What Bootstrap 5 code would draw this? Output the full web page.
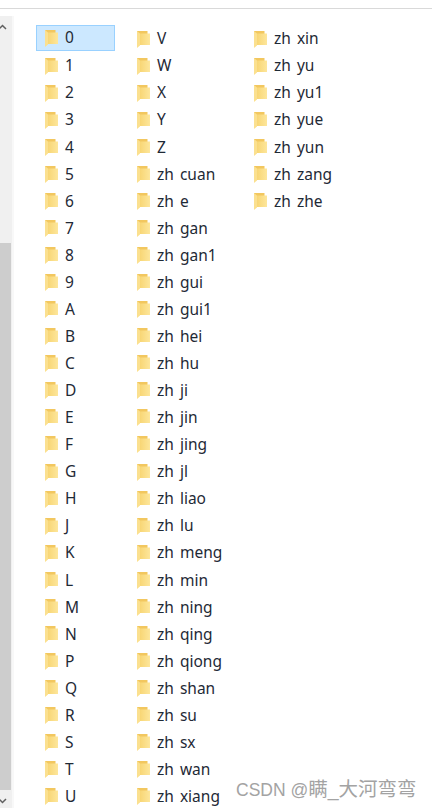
<!DOCTYPE html>
<html lang="en">
<head>
    <meta charset="UTF-8">
    <meta name="viewport" content="width=device-width, initial-scale=1.0">
    <title>Folders</title>
    <link href="https://cdn.jsdelivr.net/npm/bootstrap@5.3.0/dist/css/bootstrap.min.css" rel="stylesheet">
    <style>
        body { background: #fff; overflow: hidden; }
        .shot { height: 808px; width: 432px; position: relative; font-family: "Noto Sans", "Open Sans", sans-serif; }
        .top-rule { height: 9px; border-bottom: 1px solid #d9d9d9; }
        .scroll-rail { width: 14px; height: 792px; margin-top: 7px; background: #f0f0f0; border-right: 2px solid #f8f8f8; flex: none; }
        .scroll-btn { height: 16px; overflow: hidden; }
        .scroll-thumb { width: 11px; height: 547px; margin-top: 211px; background: #cdcdcd; }
        .file-area { padding: 16.5px 0 0 22px; }
        .file-col { width: 92px; }
        .file-col.wide { width: 117px; }
        .file-col.last { width: 120px; }
        .file-item { height: 27.07px; padding-left: 8px; gap: 7px; color: #1f2a36; font-size: 15.5px; line-height: 1; border: 1px solid transparent; white-space: pre; word-spacing: -1px; }
        .file-item.picked { background: #cce8ff; border-color: #99d1ff; width: 79px; height: 26px; margin: -1px 0 2.07px; padding-top: 1px; }
        .folder-ico { width: 13px; height: 17px; flex: none; }
        .arrow-ico { margin: 6px 0 0 -2px; flex: none; }
        .watermark { position: absolute; left: 236px; top: 779px; font-size: 17.5px; line-height: 20px; color: #a3a3a3; white-space: nowrap; font-family: "Liberation Sans", "Noto Sans CJK SC", sans-serif; }
        .watermark span { font-size: 19.5px; }
    </style>
</head>
<body>
<svg width="0" height="0" class="position-absolute">
    <defs>
        <linearGradient id="fold" x1="0" y1="0" x2="1" y2="0">
            <stop offset="0" stop-color="#f8d675"/>
            <stop offset="1" stop-color="#fde69b"/>
        </linearGradient>
        <symbol id="folder" viewBox="0 0 13 17">
            <path d="M0 0H10.5V14H0Z" fill="#f2c75f"/>
            <path d="M3 2.5H13V14H3Z" fill="url(#fold)"/>
            <path d="M0 0L3 2.5V14.5L0 17Z" fill="#fbe08f"/>
        </symbol>
    </defs>
</svg>

<div class="shot">
    <div class="top-rule"></div>
    <div class="d-flex">
        <div class="scroll-rail">
            <div class="scroll-btn d-flex align-items-center">
                <svg class="arrow-ico" width="9" height="6" viewBox="0 0 9 6"><path d="M1 5L4.5 1.5L8 5" fill="none" stroke="#606060" stroke-width="1.5"/></svg>
            </div>
            <div class="scroll-thumb"></div>
            <div class="scroll-btn d-flex align-items-center">
                <svg class="arrow-ico" width="9" height="6" viewBox="0 0 9 6"><path d="M1 1L4.5 4.5L8 1" fill="none" stroke="#606060" stroke-width="1.5"/></svg>
            </div>
        </div>
        <div class="file-area d-flex" id="files"></div>
    </div>
    <div class="watermark">CSDN @<span>瞒_大河弯弯</span></div>
</div>

<script src="https://cdn.jsdelivr.net/npm/bootstrap@5.3.0/dist/js/bootstrap.bundle.min.js"></script>
<script>
    // three columns of the folder list
    var columns = [
        ['0','1','2','3','4','5','6','7','8','9','A','B','C','D','E','F','G','H','J','K','L','M','N','P','Q','R','S','T','U'],
        ['V','W','X','Y','Z','zh  cuan','zh  e','zh  gan','zh  gan1','zh  gui','zh  gui1','zh  hei','zh  hu','zh  ji','zh  jin','zh  jing','zh  jl','zh  liao','zh  lu','zh  meng','zh  min','zh  ning','zh  qing','zh  qiong','zh  shan','zh  su','zh  sx','zh  wan','zh  xiang'],
        ['zh  xin','zh  yu','zh  yu1','zh  yue','zh  yun','zh  zang','zh  zhe']
    ];
    var colClass = ['file-col', 'file-col wide', 'file-col last'];
    var html = '';
    columns.forEach(function(col, c) {
        html += '<div class="' + colClass[c] + '">';
        col.forEach(function(name, i) {
            var picked = (c === 0 && i === 0) ? ' picked' : '';
            html += '<div class="file-item d-flex align-items-center' + picked + '">' +
                '<svg class="folder-ico"><use href="#folder"/></svg><span>' + name + '</span></div>';
        });
        html += '</div>';
    });
    document.getElementById('files').innerHTML = html;
</script>
</body>
</html>
